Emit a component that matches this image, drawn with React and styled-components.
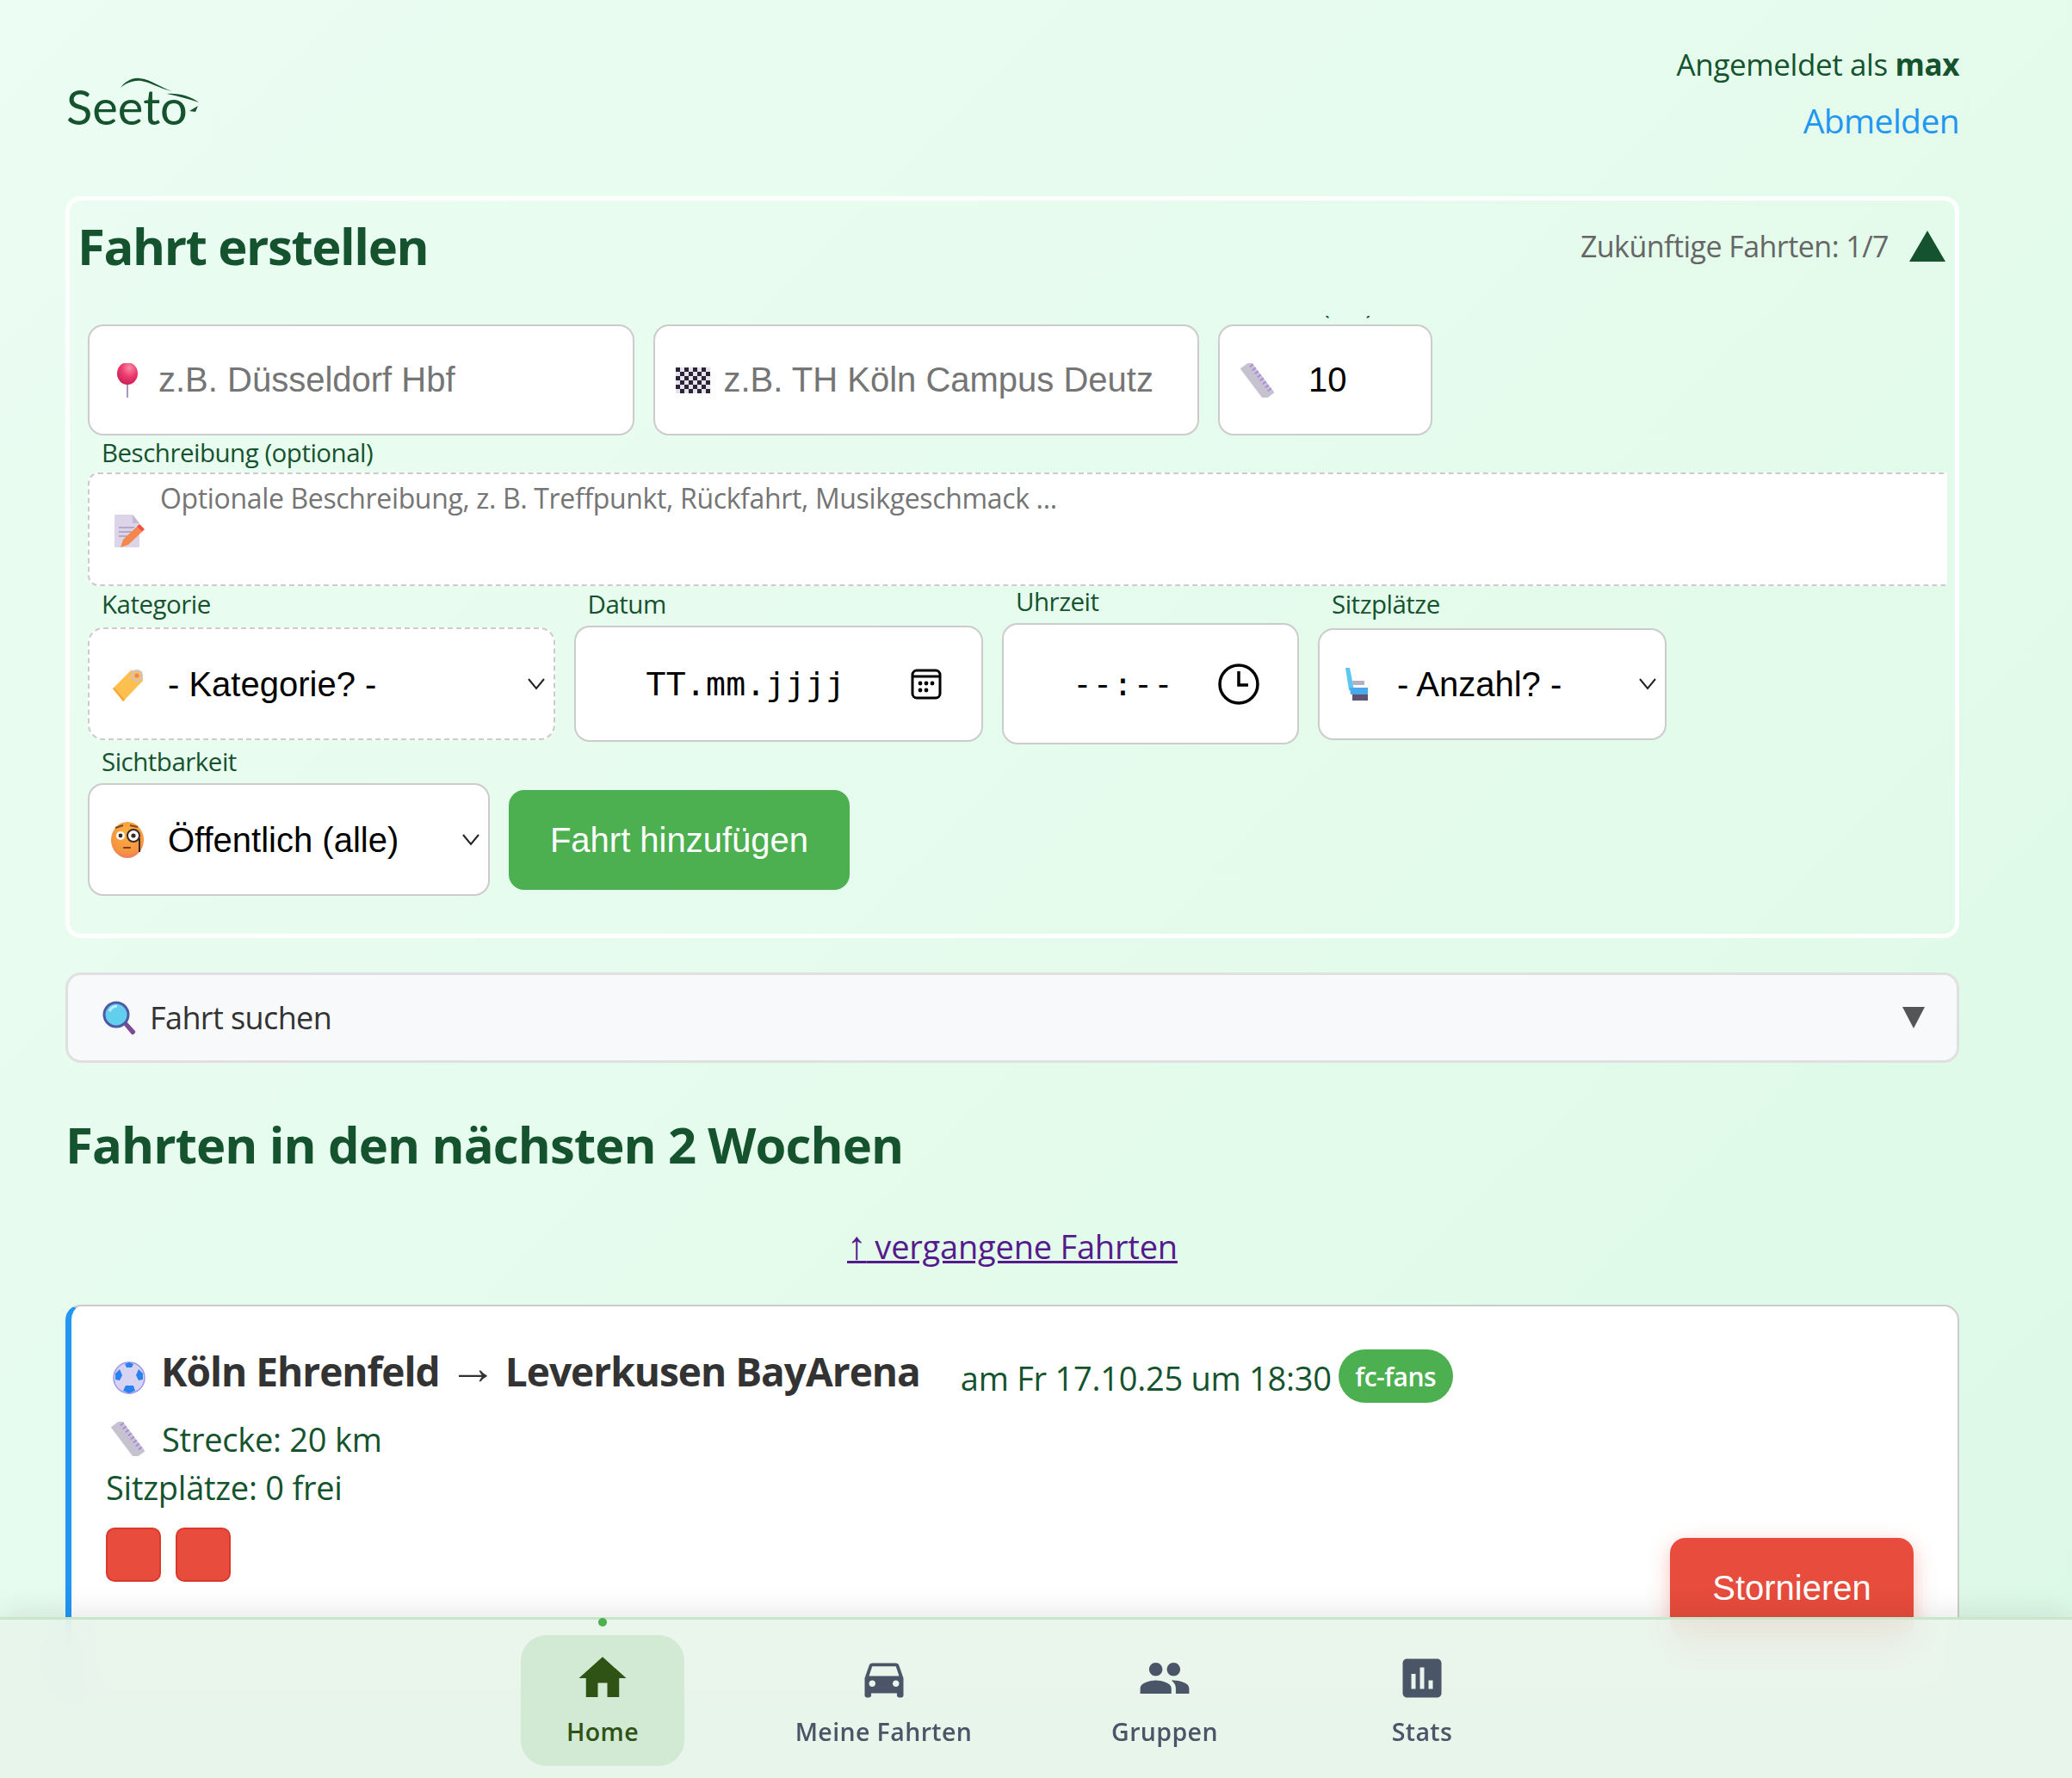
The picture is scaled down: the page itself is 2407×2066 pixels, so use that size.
import React from "react";
import styled, { createGlobalStyle } from "styled-components";
import { MdHome, MdDirectionsCar, MdPeople, MdAssessment } from "react-icons/md";

const UI_FONT = `"Open Sans", "Noto Sans", sans-serif`;
const ARIAL = `"Liberation Sans", Arial, sans-serif`;
const GREEN = "#14532d";

const GlobalStyle = createGlobalStyle`
  html, body { margin: 0; height: 100%; overflow: hidden; }
  body {
    background: linear-gradient(135deg, #ecfdf3 0%, #e3fbeb 60%, #dcf9e6 100%);
    font-family: ${UI_FONT};
    color: ${GREEN};
  }
  * { box-sizing: border-box; }
`;

const Page = styled.div`
  height: 2066px;
  overflow: hidden;
  padding: 0 131px 0 76px;
`;

const Header = styled.header`
  height: 228px;
  display: flex;
  justify-content: space-between;
  align-items: flex-start;
`;

const Logo = styled.div`
  position: relative;
  margin-top: 88px;
  width: 156px;
  height: 70px;
  font-family: Lato, sans-serif;
  font-weight: 400;
  font-size: 56px;
  line-height: 72px;
  padding-left: 1px;
  color: ${GREEN};
  svg { position: absolute; left: 0; top: 0; }
`;

const UserBox = styled.div`
  padding-top: 51px;
  text-align: right;
`;

const UserLine = styled.div`
  font-size: 35px;
  line-height: 48px;
  letter-spacing: -0.4px;
  b { font-weight: 700; }
`;

const Logout = styled.a`
  display: block;
  margin-top: 17px;
  font-size: 39px;
  line-height: 48px;
  letter-spacing: -0.6px;
  color: #2196f3;
`;

const Panel = styled.section`
  height: 862px;
  border: 5px solid #fff;
  border-radius: 18px;
  padding-left: 12px;
  padding-right: 9px;
`;

const PanelHead = styled.div`
  height: 106px;
  margin-bottom: 28px;
  margin-left: -3px;
  display: flex;
  justify-content: space-between;
  align-items: center;
  padding-right: 2px;
`;

const Title = styled.h2`
  margin: 0;
  font-size: 58px;
  line-height: 70px;
  font-weight: 700;
  letter-spacing: -1.4px;
  color: ${GREEN};
`;

const Counter = styled.div`
  display: flex;
  align-items: center;
  gap: 24px;
  font-size: 34px;
  letter-spacing: -0.55px;
  color: #666;
`;

const Triangle = styled.span`
  width: 0;
  height: 0;
  border-left: 21px solid transparent;
  border-right: 21px solid transparent;
  border-bottom: 36px solid ${GREEN};
`;

const Form = styled.div`
  height: 718px;
  overflow: hidden;
  padding-left: 9px;
  padding-top: 1px;
`;

const Row = styled.div`
  display: flex;
  gap: 22px;
  align-items: ${(p) => p.$align || "center"};
  margin-top: ${(p) => p.$mt || 0}px;
`;

const Field = styled.div`
  display: flex;
  flex-direction: column;
  width: ${(p) => p.$w}px;
`;

const Label = styled.label`
  display: block;
  height: ${(p) => p.$h || 40}px;
  line-height: ${(p) => (p.$h || 40) - (p.$up || 10)}px;
  padding-left: 16px;
  font-size: 29.5px;
  letter-spacing: -0.5px;
  white-space: nowrap;
  color: ${GREEN};
`;

const Control = styled.div`
  position: relative;
  display: flex;
  align-items: center;
  height: ${(p) => p.$h}px;
  padding-left: 24px;
  gap: ${(p) => p.$gap || 16}px;
  background: #fff;
  border: 2px ${(p) => (p.$dashed ? "dashed" : "solid")} #ccc;
  border-radius: 18px;
  svg { flex: none; }
`;

const TextInput = styled.input`
  flex: 1;
  min-width: 0;
  border: 0;
  outline: 0;
  padding: 0;
  background: none;
  font-family: ${ARIAL};
  font-size: 40px;
  color: #000;
  &::placeholder { color: #757575; opacity: 1; }
`;

const Select = styled.select`
  flex: 1;
  min-width: 0;
  border: 0;
  outline: 0;
  padding: 0 0 0 8px;
  background: none;
  appearance: none;
  font-family: ${ARIAL};
  font-size: 40px;
  color: #000;
`;

const Chevron = styled.svg`
  position: absolute;
  right: 8px;
  top: 50%;
  margin-top: -8px;
`;

const Mono = styled.span`
  flex: 1;
  font-family: "DejaVu Sans Mono", "Liberation Mono", monospace;
  font-size: 38px;
  letter-spacing: ${(p) => p.$ls || 0}px;
  color: #000;
  padding-left: ${(p) => p.$pl || 0}px;
`;

const IconGap = styled.span`
  flex: none;
  width: ${(p) => p.$w}px;
  margin-left: -16px;
`;

const DescBox = styled.div`
  display: flex;
  width: 2240px;
  height: 132px;
  background: #fff;
  border: 2px dashed #ccc;
  border-radius: 12px;
  padding: 0 0 0 28px;
  gap: 18px;
  svg { flex: none; margin-top: 46px; }
`;

const DescInput = styled.textarea`
  flex: 1;
  border: 0;
  outline: 0;
  resize: none;
  padding: 6px 0 0;
  background: none;
  font-family: ${UI_FONT};
  font-size: 32px;
  letter-spacing: -0.35px;
  &::placeholder { color: #757575; opacity: 1; }
`;

const AddButton = styled.button`
  width: 396px;
  height: 116px;
  margin-bottom: 7px;
  border: 0;
  border-radius: 18px;
  background: #4caf50;
  color: #fff;
  font-family: ${ARIAL};
  font-size: 40px;
`;

const SearchBar = styled.div`
  display: flex;
  align-items: center;
  height: 105px;
  margin-top: 40px;
  padding: 0 37px 0 40px;
  gap: 15px;
  background: #f8f9fa;
  border: 3px solid #e0e0e0;
  border-radius: 18px;
  font-size: 36px;
  letter-spacing: -0.6px;
  color: #333;
  span { flex: 1; }
  i {
    width: 0;
    height: 0;
    border-left: 13px solid transparent;
    border-right: 13px solid transparent;
    border-top: 25px solid #555;
  }
`;

const SectionTitle = styled.h2`
  margin: 60px 0 0;
  font-size: 58px;
  line-height: 70px;
  font-weight: 700;
  letter-spacing: -0.9px;
  color: ${GREEN};
`;

const PastLink = styled.a`
  display: block;
  height: 50px;
  margin-top: 58px;
  text-align: center;
  font-size: 38px;
  line-height: 50px;
  letter-spacing: -0.2px;
  color: #551a8b;
  text-decoration: underline;
`;

// the arrows come from a bigger fallback font in the original
const Arrow = styled.span`
  font-family: ${ARIAL};
  font-size: 1.2em;
  font-weight: 400;
  line-height: 1;
  vertical-align: ${(p) => p.$lift || 0}px;
`;

const RideCard = styled.article`
  position: relative;
  height: 460px;
  margin-top: 43px;
  padding: 44px 0 0 40px;
  background: #fff;
  border: 2px solid #ccc;
  border-left: 7px solid #2196f3;
  border-radius: 18px;
`;

const RideHead = styled.div`
  display: flex;
  align-items: center;
  gap: 8px;
  height: 62px;
`;

const RideTitle = styled.h3`
  display: flex;
  align-items: center;
  gap: 18px;
  margin: 0 39px 0 8px;
  font-size: 46px;
  font-weight: 700;
  letter-spacing: -1px;
  color: #333;
  white-space: pre;
  svg { margin-top: 16px; }
`;

const RideWhen = styled.span`
  margin-top: 15px;
  font-size: 38px;
  letter-spacing: -0.25px;
`;

const Badge = styled.span`
  display: inline-flex;
  align-items: center;
  justify-content: center;
  width: 133px;
  height: 62px;
  margin-top: 12px;
  border-radius: 31px;
  background: #4caf50;
  color: #fff;
  font-size: 30px;
  font-weight: 600;
  letter-spacing: -0.5px;
`;

const RideLine = styled.div`
  display: flex;
  align-items: center;
  gap: 19px;
  height: 56px;
  margin-top: ${(p) => p.$mt || 0}px;
  padding-left: ${(p) => p.$pl || 0}px;
  font-size: 38px;
  letter-spacing: -0.25px;
`;

const Seats = styled.div`
  display: flex;
  gap: 17px;
  margin-top: 19px;
`;

const Seat = styled.span`
  width: 64px;
  height: 63px;
  border-radius: 10px;
  background: #e74c3c;
  border: 2px solid #d93a2b;
`;

const CancelButton = styled.button`
  position: absolute;
  right: 51px;
  top: 269px;
  width: 283px;
  height: 116px;
  border: 0;
  border-radius: 18px;
  background: #e74c3c;
  color: #fff;
  font-family: ${ARIAL};
  font-size: 40px;
  box-shadow: 0 8px 24px rgba(231, 76, 60, 0.35);
`;

const BottomNav = styled.nav`
  position: fixed;
  left: 0;
  right: 0;
  bottom: 0;
  height: 187px;
  display: flex;
  padding: 18px 0 0 605px;
  background: rgba(232, 244, 234, 0.9);
  border-top: 3px solid #c8e6c9;
  backdrop-filter: blur(20px);
  box-shadow: 0 -6px 32px rgba(0, 0, 0, 0.09);
`;

const NavItem = styled.a`
  position: relative;
  display: flex;
  flex-direction: column;
  align-items: center;
  width: ${(p) => p.$w}px;
  height: 152px;
  margin-left: ${(p) => p.$ml || 0}px;
  padding-top: 17px;
  border-radius: 30px;
  background: ${(p) => (p.$active ? "#d2e9d3" : "transparent")};
  color: ${(p) => (p.$active ? "#2f5315" : "#4a5568")};
  font-size: 28.5px;
  font-weight: 600;
  line-height: 40px;
  letter-spacing: 0.4px;
  white-space: nowrap;
  svg { flex: none; height: 66px; margin-bottom: 9px; }
  ${(p) =>
    p.$active &&
    `&::before {
      content: "";
      position: absolute;
      top: -20px;
      left: 50%;
      width: 10px;
      height: 10px;
      margin-left: -5px;
      border-radius: 50%;
      background: #4caf50;
    }`}
`;

// hand drawn stand-ins for the colour emoji, there is no emoji font
const Pin = () => (
  <svg width="40" height="40" viewBox="0 0 40 40">
    <defs>
      <radialGradient id="pinHead" cx="0.6" cy="0.25" r="0.8">
        <stop offset="0" stopColor="#f98aa8" />
        <stop offset="0.5" stopColor="#ec3a6c" />
        <stop offset="1" stopColor="#c81e58" />
      </radialGradient>
    </defs>
    <rect x="19" y="20" width="2" height="20" fill="#a99abd" />
    <ellipse cx="20" cy="12" rx="12" ry="13" fill="url(#pinHead)" />
  </svg>
);

const Flag = () => {
  const cells = [];
  for (let r = 0; r < 6; r++) {
    for (let c = 0; c < 8; c++) {
      cells.push(
        <rect key={r + "-" + c} x={c * 5} y={r * 5} width="5" height="5" fill={(r + c) % 2 ? "#e6e0f0" : "#2b2433"} />
      );
    }
  }
  return (
    <svg width="40" height="30" viewBox="0 0 40 30">
      {cells}
    </svg>
  );
};

const Ruler = () => (
  <svg width="40" height="40" viewBox="0 0 40 40">
    <g transform="rotate(-37 20 20)">
      <rect x="12" y="-3" width="15" height="46" rx="1" fill="#c6c2cf" />
      <path d="M22 2h5M22 7h5M22 12h5M22 17h5M22 22h5M22 27h5M22 32h5M22 37h5" stroke="#a57ce8" strokeWidth="1.4" />
    </g>
  </svg>
);

const Memo = () => (
  <svg width="36" height="40" viewBox="0 0 36 40">
    <path d="M1 1h21l8 10v28H1z" fill="#dcd4e8" />
    <path d="M22 1l8 10h-8z" fill="#c4bad4" />
    <path d="M6 16h18M6 21h16M6 26h10" stroke="#a79cb8" strokeWidth="1.5" />
    <path d="M8 39l3-9 16-15 6 6-16 15z" fill="#f4874b" />
    <path d="M27 15l3-3 6 6-3 3z" fill="#f4523f" />
  </svg>
);

const Tag = () => (
  <svg width="44" height="42" viewBox="0 0 44 42">
    <path d="M3 26L24 5l13 1 1 11-23 24z" fill="#fdc04f" />
    <path d="M3 26l12 15 2-2L5 25z" fill="#f4a93a" />
    <circle cx="31" cy="11" r="6" fill="none" stroke="#c9c2d4" strokeWidth="2" />
    <circle cx="31" cy="11" r="2.5" fill="#ef7f6c" />
  </svg>
);

const Chair = () => (
  <svg width="40" height="40" viewBox="0 0 40 40">
    <path d="M6 1h5l5 26H10z" fill="#5cc8f2" />
    <rect x="14" y="16" width="14" height="5" rx="1" fill="#b5afc0" />
    <path d="M11 24h21v8H12z" fill="#4aa8ec" />
    <rect x="14" y="32" width="18" height="7" fill="#5e5270" />
  </svg>
);

const Monocle = () => (
  <svg width="40" height="44" viewBox="0 0 40 44">
    <defs>
      <radialGradient id="faceGrad" cx="0.5" cy="0.3" r="0.8">
        <stop offset="0" stopColor="#fcb040" />
        <stop offset="0.7" stopColor="#f59340" />
        <stop offset="1" stopColor="#ee6a75" />
      </radialGradient>
    </defs>
    <ellipse cx="20" cy="22" rx="19" ry="21" fill="url(#faceGrad)" />
    <circle cx="12" cy="17" r="5" fill="#fff" />
    <circle cx="12" cy="17" r="2.4" fill="#3a2a28" />
    <circle cx="27" cy="17" r="7" fill="#fff" stroke="#3a2a28" strokeWidth="2" />
    <circle cx="27" cy="17" r="2.6" fill="#3a2a28" />
    <path d="M34 20v16" stroke="#3a2a28" strokeWidth="2" />
    <path d="M6 8l9-3M23 5l9 2" stroke="#7a4a20" strokeWidth="2" />
    <path d="M16 31h7" stroke="#7a3a28" strokeWidth="2.2" strokeLinecap="round" />
  </svg>
);

const Lens = () => (
  <svg width="40" height="40" viewBox="0 0 40 40">
    <path d="M24 27l4-3 10 11c1 2-2 5-4 4z" fill="#7d4b94" />
    <circle cx="16" cy="16" r="14" fill="#63cfee" stroke="#4f5aa5" strokeWidth="3" />
    <path d="M8 12c2-4 5-6 9-6" stroke="#bdeefa" strokeWidth="3" fill="none" />
  </svg>
);

const Ball = () => (
  <svg width="38" height="38" viewBox="0 0 38 38">
    <circle cx="19" cy="19" r="18" fill="#d6d4f2" />
    <circle cx="19" cy="19" r="18" fill="none" stroke="#9c96e8" strokeWidth="1.5" />
    <path d="M14 3l5-2 5 2-2 4h-6zM3 14l5-5 3 7-3 6-5-1zM35 14l-5-5-3 7 3 6 5-1zM12 34l3-6h9l2 6-7 3z" fill="#2a82f0" />
  </svg>
);

const ChevronDown = () => (
  <Chevron width="24" height="16" viewBox="0 0 24 16">
    <path d="M3 2l9 11 9-11" fill="none" stroke="#222" strokeWidth="2" />
  </Chevron>
);

const CalendarIcon = () => (
  <svg width="36" height="36" viewBox="0 0 36 36">
    <rect x="2" y="2" width="32" height="32" rx="5" fill="none" stroke="#000" strokeWidth="3" />
    <path d="M2 9h32" stroke="#000" strokeWidth="3" />
    <g fill="#000">
      <circle cx="11" cy="17" r="2.4" />
      <circle cx="18" cy="17" r="2.4" />
      <circle cx="25" cy="17" r="2.4" />
      <circle cx="11" cy="25" r="2.4" />
      <circle cx="18" cy="25" r="2.4" />
    </g>
  </svg>
);

const ClockIcon = () => (
  <svg width="48" height="48" viewBox="0 0 48 48">
    <circle cx="24" cy="24" r="22" fill="none" stroke="#000" strokeWidth="3.5" />
    <path d="M24 9v16h11" fill="none" stroke="#000" strokeWidth="3.5" />
  </svg>
);

export default function App() {
  return (
    <>
      <GlobalStyle />
      <Page>
        <Header>
          <Logo>
            <svg width="156" height="50" viewBox="0 0 156 50">
              <path d="M64 14C70 6 78 2 86 3c14 1 24 11 38 15-14-3-24-10-36-12-10-1-18 3-24 8z" fill="#14532d" />
              <path d="M118 21c14-1 28 3 37 10-11-4-23-7-37-10z" fill="#14532d" />
              <path d="M144 41l10-6-3 7z" fill="#14532d" />
            </svg>
            Seeto
          </Logo>
          <UserBox>
            <UserLine>
              Angemeldet als <b>max</b>
            </UserLine>
            <Logout>Abmelden</Logout>
          </UserBox>
        </Header>

        <Panel>
          <PanelHead>
            <Title>Fahrt erstellen</Title>
            <Counter>
              Zukünftige Fahrten: 1/7
              <Triangle />
            </Counter>
          </PanelHead>
          <Form>
            <Row $mt={-31}>
              <Field $w={634.5}>
                <Label $up={6}>Start</Label>
                <Control $h={129}>
                  <Pin />
                  <TextInput placeholder="z.B. Düsseldorf Hbf" />
                </Control>
              </Field>
              <Field $w={634.5}>
                <Label $up={6}>Ziel</Label>
                <Control $h={129}>
                  <Flag />
                  <TextInput placeholder="z.B. TH Köln Campus Deutz" />
                </Control>
              </Field>
              <Field $w={249}>
                <Label $up={6}>Strecke (km)</Label>
                <Control $h={129} $gap={39}>
                  <Ruler />
                  <TextInput defaultValue="10" />
                </Control>
              </Field>
            </Row>
            <Label $h={43} $up={4}>Beschreibung (optional)</Label>
            <DescBox>
              <Memo />
              <DescInput placeholder="Optionale Beschreibung, z. B. Treffpunkt, Rückfahrt, Musikgeschmack ..." />
            </DescBox>
            <Row $mt={3}>
              <Field $w={542.5}>
                <Label $up={14}>Kategorie</Label>
                <Control $h={131} $dashed $gap={15}>
                  <Tag />
                  <Select>
                    <option>- Kategorie? -</option>
                  </Select>
                  <ChevronDown />
                </Control>
              </Field>
              <Field $w={475.5}>
                <Label>Datum</Label>
                <Control $h={135}>
                  <Mono $pl={58} $ls={0.3}>TT.mm.jjjj</Mono>
                  <CalendarIcon />
                  <IconGap $w={46} />
                </Control>
              </Field>
              <Field $w={345}>
                <Label>Uhrzeit</Label>
                <Control $h={141}>
                  <Mono $pl={56} $ls={0.6}>--:--</Mono>
                  <ClockIcon />
                  <IconGap $w={44} />
                </Control>
              </Field>
              <Field $w={405}>
                <Label $up={16}>Sitzplätze</Label>
                <Control $h={130} $gap={18}>
                  <Chair />
                  <Select>
                    <option>- Anzahl? -</option>
                  </Select>
                  <ChevronDown />
                </Control>
              </Field>
            </Row>
            <Row $mt={5} $align="flex-end">
              <Field $w={467}>
                <Label>Sichtbarkeit</Label>
                <Control $h={131} $gap={19}>
                  <Monocle />
                  <Select>
                    <option>Öffentlich (alle)</option>
                  </Select>
                  <ChevronDown />
                </Control>
              </Field>
              <AddButton>Fahrt hinzufügen</AddButton>
            </Row>
          </Form>
        </Panel>

        <SearchBar>
          <Lens />
          <span>Fahrt suchen</span>
          <i />
        </SearchBar>

        <SectionTitle>Fahrten in den nächsten 2 Wochen</SectionTitle>
        <PastLink>
          <Arrow>↑</Arrow> vergangene Fahrten
        </PastLink>

        <RideCard>
          <RideHead>
            <RideTitle>
              <Ball />
              <span>
                Köln Ehrenfeld <Arrow $lift={3}>→</Arrow> Leverkusen BayArena
              </span>
            </RideTitle>
            <RideWhen>am Fr 17.10.25 um 18:30</RideWhen>
            <Badge>fc-fans</Badge>
          </RideHead>
          <RideLine $mt={20} $pl={6}>
            <Ruler />
            Strecke: 20 km
          </RideLine>
          <RideLine>Sitzplätze: 0 frei</RideLine>
          <Seats>
            <Seat />
            <Seat />
          </Seats>
          <CancelButton>Stornieren</CancelButton>
        </RideCard>
      </Page>

      <BottomNav>
        <NavItem $w={190} $active>
          <MdHome size={66} />
          Home
        </NavItem>
        <NavItem $w={285} $ml={89}>
          <MdDirectionsCar size={60} />
          Meine Fahrten
        </NavItem>
        <NavItem $w={204} $ml={82}>
          <MdPeople size={62} />
          Gruppen
        </NavItem>
        <NavItem $w={190} $ml={102}>
          <MdAssessment size={60} />
          Stats
        </NavItem>
      </BottomNav>
    </>
  );
}
